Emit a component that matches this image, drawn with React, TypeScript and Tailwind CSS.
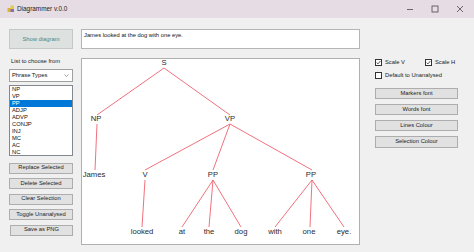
import React from 'react';

const font = { fontFamily: '"Liberation Sans", Arial, sans-serif' };

const phraseTypes = ['NP', 'VP', 'PP', 'ADJP', 'ADVP', 'CONJP', 'INJ', 'MC', 'AC', 'NC'];

// canvas inner origin in page coords
const OX = 82;
const OY = 59;

// node label centres (page coords)
const labels = [
  { t: 'S', x: 164, y: 63 },
  { t: 'NP', x: 96, y: 119 },
  { t: 'VP', x: 230, y: 119 },
  { t: 'James', x: 94, y: 175 },
  { t: 'V', x: 145, y: 175 },
  { t: 'PP', x: 213, y: 175 },
  { t: 'PP', x: 311, y: 175 },
  { t: 'looked', x: 142, y: 232 },
  { t: 'at', x: 182, y: 232 },
  { t: 'the', x: 209, y: 232 },
  { t: 'dog', x: 241, y: 232 },
  { t: 'with', x: 275, y: 232 },
  { t: 'one', x: 309, y: 232 },
  { t: 'eye.', x: 344, y: 232 },
];

const lines = [
  [164, 68, 97, 115],
  [164, 68, 230, 115],
  [97, 124, 95, 170],
  [230, 124, 145, 170],
  [230, 124, 213, 170],
  [230, 124, 312, 170],
  [145, 180, 142, 227],
  [213, 180, 182, 227],
  [213, 180, 209, 227],
  [213, 180, 241, 227],
  [312, 180, 275, 227],
  [312, 180, 310, 227],
  [312, 180, 344, 227],
];

const Btn = ({ children, className = '' }: { children: React.ReactNode; className?: string }) => (
  <div
    className={`h-[11px] flex items-center justify-center bg-[#e1e1e1] border border-[#adadad] text-[5.8px] leading-none text-[#222] ${className}`}
  >
    {children}
  </div>
);

const Check = ({ checked }: { checked: boolean }) => (
  <div className="w-[7px] h-[7px] border border-[#333] bg-white flex items-center justify-center">
    {checked && (
      <svg width="5" height="5" viewBox="0 0 5 5">
        <path d="M0.6 2.6 L2 3.9 L4.4 1" fill="none" stroke="#333" strokeWidth="0.8" />
      </svg>
    )}
  </div>
);

export default function App() {
  return (
    <div className="w-[474px] h-[252px] bg-[#f0f0f0] flex flex-col overflow-hidden" style={font}>
      {/* title bar */}
      <div className="h-[18px] bg-[#e6dde4] flex items-center pl-[7px] text-[6.4px] text-[#222]">
        <svg width="8" height="8" viewBox="0 0 8 8" className="mr-[2px]">
          <rect x="0.5" y="3" width="3.5" height="4" fill="#d9b43a" />
          <rect x="3.5" y="0.5" width="3.5" height="3.5" fill="#e6c84a" />
          <rect x="3.5" y="4" width="3.5" height="3" fill="#8a6fb0" />
        </svg>
        <span>Diagrammer v.0.0</span>
        <div className="ml-auto flex items-center text-[#333]">
          <svg width="8" height="8" viewBox="0 0 8 8" className="mr-[17px]">
            <path d="M1 4.5 H7" stroke="#333" strokeWidth="0.7" />
          </svg>
          <svg width="8" height="8" viewBox="0 0 8 8" className="mr-[17px]">
            <rect x="1" y="1" width="6" height="6" fill="none" stroke="#333" strokeWidth="0.7" />
          </svg>
          <svg width="8" height="8" viewBox="0 0 8 8" className="mr-[10px]">
            <path d="M1 1 L7 7 M7 1 L1 7" stroke="#333" strokeWidth="0.7" />
          </svg>
        </div>
      </div>

      {/* body */}
      <div className="flex flex-1 pt-[11px] pl-[9px]">
        {/* left column */}
        <div className="w-[64px] flex flex-col">
          <div className="h-[20px] flex items-center justify-center bg-[#dde1e0] border border-[#c4c8c8] text-[5.8px] text-[#3a8a8f]">
            Show diagram
          </div>
          <div className="mt-[10px] pl-[2px] text-[5.8px] leading-none text-[#222]">List to choose from</div>
          <div className="mt-[4px] h-[13px] bg-white border border-[#a0a0a0] flex items-center pl-[2px] pr-[3px] text-[5.8px] text-[#111]">
            <span>Phrase Types</span>
            <svg width="5" height="3" viewBox="0 0 5 3" className="ml-auto">
              <path d="M0.5 0.5 L2.5 2.5 L4.5 0.5" fill="none" stroke="#666" strokeWidth="0.6" />
            </svg>
          </div>
          <div className="mt-[3px] h-[71px] bg-white border border-[#828790] pt-[0.5px] flex flex-col">
            {phraseTypes.map((p) => (
              <div
                key={p}
                className={`h-[7px] leading-[7px] pl-[2px] text-[5.8px] ${
                  p === 'PP' ? 'bg-[#0078d7] text-white' : 'text-[#111]'
                }`}
              >
                {p}
              </div>
            ))}
          </div>
          <div className="mt-[7px] flex flex-col gap-[4.5px]">
            <Btn>Replace Selected</Btn>
            <Btn>Delete Selected</Btn>
            <Btn>Clear Selection</Btn>
            <Btn>Toggle Unanalysed</Btn>
            <Btn className="ml-[1px]">Save as PNG</Btn>
          </div>
        </div>

        {/* middle column */}
        <div className="ml-[8px] w-[279px] flex flex-col">
          <div className="h-[20px] bg-white border border-[#b5b5b5] pl-[2px] pt-[3px] text-[5.8px] leading-none text-[#111]">
            James looked at the dog with one eye.
          </div>
          <div className="mt-[9px] h-[187px] bg-white border border-[#b0b0b0]">
            <div className="relative w-[277px] h-[185px]">
              <svg width="277" height="185" viewBox="82 59 277 185">
                {lines.map(([x1, y1, x2, y2], i) => (
                  <line key={i} x1={x1} y1={y1} x2={x2} y2={y2} stroke="#ec4c5c" strokeWidth="0.8" />
                ))}
              </svg>
              {labels.map((l, i) => (
                <span
                  key={i}
                  className="absolute -translate-x-1/2 -translate-y-1/2 text-[7.7px] leading-none whitespace-nowrap text-[#2a2a2a]"
                  style={{ left: l.x - OX, top: l.y - OY }}
                >
                  {l.t}
                </span>
              ))}
            </div>
          </div>
        </div>

        {/* right column */}
        <div className="ml-[15px] w-[83px] flex flex-col pt-[30px]">
          <div className="flex items-center text-[5.8px] leading-none text-[#222]">
            <Check checked />
            <span className="ml-[3px]">Scale V</span>
            <div className="ml-[20px] flex items-center">
              <Check checked />
              <span className="ml-[3px]">Scale H</span>
            </div>
          </div>
          <div className="mt-[6px] flex items-center text-[5.8px] leading-none text-[#222]">
            <Check checked={false} />
            <span className="ml-[3px]">Default to Unanalysed</span>
          </div>
          <div className="mt-[9px] flex flex-col gap-[5px]">
            <Btn>Markers font</Btn>
            <Btn>Words font</Btn>
            <Btn>Lines Colour</Btn>
            <Btn className="h-[12px]">Selection Colour</Btn>
          </div>
        </div>
      </div>
    </div>
  );
}
